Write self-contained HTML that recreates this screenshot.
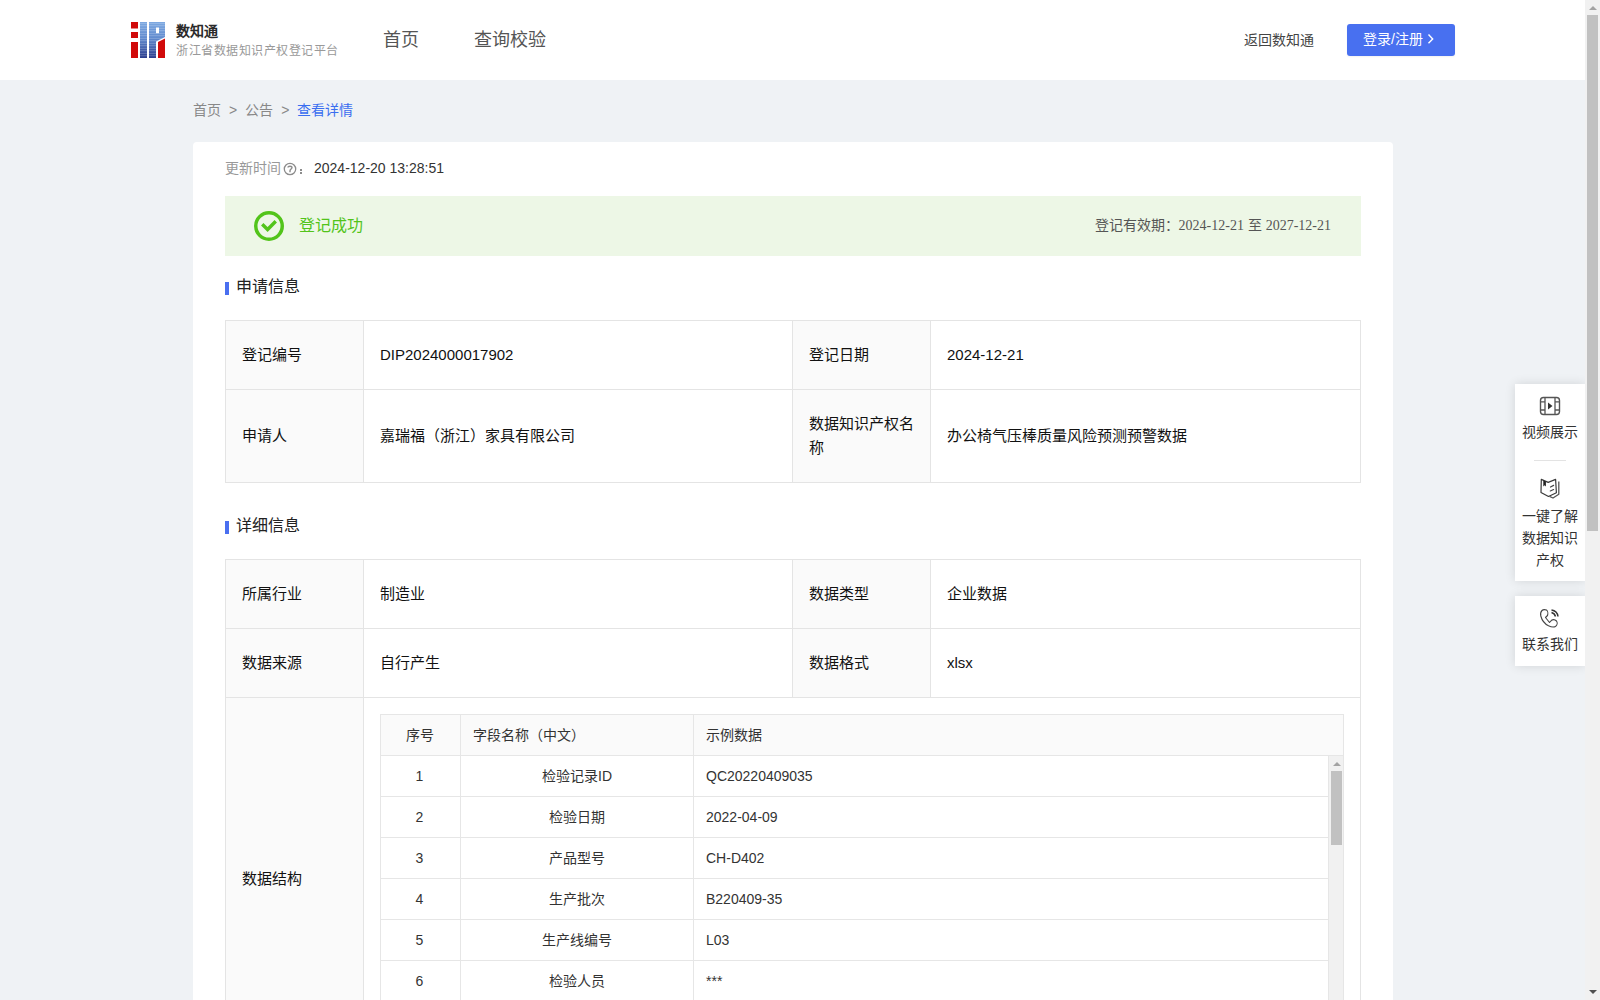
<!DOCTYPE html>
<html lang="zh-CN">
<head>
<meta charset="utf-8">
<title>查看详情</title>
<style>
*{box-sizing:border-box;margin:0;padding:0}
html,body{width:1600px;height:1000px;overflow:hidden}
body{position:relative;background:#eff2f5;font-family:"Liberation Sans",sans-serif;color:#333;font-size:14px}
.abs{position:absolute;white-space:nowrap}
.header{position:absolute;left:0;top:0;width:1585px;height:80px;background:#fff}
.btn{position:absolute;left:1347px;top:24px;width:108px;height:32px;background:#4870f0;border-radius:3px;box-shadow:0 1px 2px rgba(0,0,0,.06);color:#fff;font-size:14px;line-height:32px}
.card{position:absolute;left:193px;top:142px;width:1200px;height:900px;background:#fff;border-radius:4px}
.alert{position:absolute;left:225px;top:196px;width:1136px;height:60px;background:#edf7e6}
.bar{position:absolute;width:4px;height:13px;background:#4a6ff0}
.title{font-size:16px;color:#222;line-height:24px}
table.info{position:absolute;left:225px;border-collapse:collapse;table-layout:fixed;width:1135px;font-size:15px;color:#111}
table.info td{border:1px solid #e4e4e4;padding:22px 16px;line-height:24px;vertical-align:middle;word-break:break-all}
table.info td.l{background:#fafafa}
.side{position:absolute;left:1515px;width:70px;background:#fff;box-shadow:0 0 10px rgba(0,0,0,.12);text-align:center;font-size:14px;color:#333}
.sb{position:absolute;background:#f1f1f1}
</style>
</head>
<body>
<div class="header">
  <svg class="abs" style="left:131px;top:22px" width="34" height="36" viewBox="0 0 34 36">
    <defs>
      <linearGradient id="g" x1="0" y1="0" x2="0" y2="1">
        <stop offset="0" stop-color="#79a6e0"/>
        <stop offset="0.45" stop-color="#5b86cc"/>
        <stop offset="1" stop-color="#24368a"/>
      </linearGradient>
      <pattern id="sl" x="0" y="0" width="34" height="2.5" patternUnits="userSpaceOnUse">
        <rect x="0" y="0.8" width="34" height="1" fill="#fff" opacity="0.28"/>
      </pattern>
    </defs>
    <rect x="0" y="0" width="7" height="6.5" fill="#d10a0a"/>
    <rect x="0" y="10" width="7" height="6" fill="#d10a0a"/>
    <rect x="0" y="20" width="7" height="16" fill="#d10a0a"/>
    <rect x="9" y="0" width="7" height="36" fill="url(#g)"/>
    <path d="M18 0H34V15L25 19.5V36H18Z M25 5.6V11.2H28V5.6Z" fill="url(#g)" fill-rule="evenodd"/>
    <path d="M27 20L34 16.5V36H27Z" fill="#d10a0a"/>
    <rect x="9" y="0" width="7" height="36" fill="url(#sl)"/>
    <path d="M18 0H34V15L25 19.5V36H18Z M25 5.6V11.2H28V5.6Z" fill="url(#sl)" fill-rule="evenodd"/>
  </svg>
  <div class="abs" style="left:176px;top:21px;font-size:14px;font-weight:bold;color:#2a2a2a;line-height:20px">数知通</div>
  <div class="abs" style="left:176px;top:42px;font-size:12px;letter-spacing:0.5px;color:#999;line-height:18px">浙江省数据知识产权登记平台</div>
  <div class="abs" style="left:383px;top:28px;font-size:18px;color:#555;line-height:24px">首页</div>
  <div class="abs" style="left:474px;top:28px;font-size:18px;color:#555;line-height:24px">查询校验</div>
  <div class="abs" style="left:1244px;top:29px;font-size:14px;color:#444;line-height:22px">返回数知通</div>
  <div class="btn"><span class="abs" style="left:16px;top:-1px">登录/注册</span><svg class="abs" style="left:80px;top:9px" width="8" height="12" viewBox="0 0 8 12"><path d="M1.5 1.5L5.7 5.9L1.5 10.3" fill="none" stroke="#fff" stroke-width="1.4"/></svg></div>
</div>

<div class="abs" style="left:193px;top:99px;font-size:14px;line-height:22px;color:#888">首页<span style="margin:0 8px">&gt;</span>公告<span style="margin:0 8px">&gt;</span><span style="color:#3a6ef0">查看详情</span></div>

<div class="card"></div>

<div class="abs" style="left:225px;top:157px;font-size:14px;line-height:22px;color:#999">更新时间</div>
<svg class="abs" style="left:283px;top:162px" width="14" height="14" viewBox="0 0 14 14">
  <circle cx="7" cy="7" r="5.7" fill="none" stroke="#8c8c8c" stroke-width="1.3"/>
  <path d="M5 5.6C5 3.7 9 3.7 9 5.6C9 7 7 7.1 7 8.8V10.2" fill="none" stroke="#8c8c8c" stroke-width="1.4"/>
</svg>
<div class="abs" style="left:300px;top:169px;width:2px;height:2px;background:#8c8c8c"></div>
<div class="abs" style="left:300px;top:172px;width:2px;height:2px;background:#8c8c8c"></div>
<div class="abs" style="left:314px;top:157px;font-size:14px;line-height:22px;color:#333">2024-12-20 13:28:51</div>

<div class="alert">
  <svg class="abs" style="left:29px;top:15px" width="30" height="30" viewBox="0 0 30 30">
    <circle cx="15" cy="15" r="13.25" fill="none" stroke="#52c41a" stroke-width="3.5"/>
    <path d="M8.25 13.2L13.6 18.5L21.75 10.3" fill="none" stroke="#52c41a" stroke-width="3.4"/>
  </svg>
  <div class="abs" style="left:74px;top:18px;font-size:16px;line-height:24px;color:#52c41a">登记成功</div>
  <div class="abs" style="right:30px;top:18px;font-size:14px;line-height:22px;color:#555">登记有效期：<span style="font-family:'Liberation Serif',serif">2024-12-21</span> 至 <span style="font-family:'Liberation Serif',serif">2027-12-21</span></div>
</div>

<div class="bar" style="left:225px;top:282px"></div>
<div class="abs title" style="left:236px;top:275px">申请信息</div>

<table class="info" style="top:320px">
  <colgroup><col style="width:138px"><col style="width:429px"><col style="width:138px"><col style="width:430px"></colgroup>
  <tr><td class="l">登记编号</td><td>DIP2024000017902</td><td class="l">登记日期</td><td>2024-12-21</td></tr>
  <tr><td class="l">申请人</td><td>嘉瑞福（浙江）家具有限公司</td><td class="l">数据知识产权名称</td><td>办公椅气压棒质量风险预测预警数据</td></tr>
</table>

<div class="bar" style="left:225px;top:521px"></div>
<div class="abs title" style="left:236px;top:514px">详细信息</div>

<table class="info" style="top:559px">
  <colgroup><col style="width:138px"><col style="width:429px"><col style="width:138px"><col style="width:430px"></colgroup>
  <tr><td class="l">所属行业</td><td>制造业</td><td class="l">数据类型</td><td>企业数据</td></tr>
  <tr><td class="l">数据来源</td><td>自行产生</td><td class="l">数据格式</td><td>xlsx</td></tr>
  <tr><td class="l" style="height:362px">数据结构</td><td colspan="3"></td></tr>
</table>


<!-- inner data structure table -->
<div class="abs" style="left:380px;top:714px;width:964px;height:42px;border:1px solid #e6e6e6;background:#fafafa;font-size:14px;color:#333;line-height:40px">
  <div class="abs" style="left:79px;top:0;width:1px;height:40px;background:#e6e6e6"></div>
  <div class="abs" style="left:312px;top:0;width:1px;height:40px;background:#e6e6e6"></div>
  <div class="abs" style="left:-1px;top:0;width:79px;text-align:center">序号</div>
  <div class="abs" style="left:92px;top:0">字段名称（中文）</div>
  <div class="abs" style="left:325px;top:0">示例数据</div>
</div>
<div class="abs" style="left:380px;top:756px;width:964px;height:260px;border-left:1px solid #e6e6e6;border-right:1px solid #e6e6e6;overflow:hidden;font-size:14px;color:#333;line-height:40px">
  <div class="abs" style="left:79px;top:0;width:1px;height:260px;background:#e6e6e6"></div>
  <div class="abs" style="left:312px;top:0;width:1px;height:260px;background:#e6e6e6"></div>
  <div class="abs" style="left:947px;top:0;width:1px;height:260px;background:#e6e6e6"></div>
  <div class="abs" style="left:0;top:0px;width:947px;height:41px;border-bottom:1px solid #e6e6e6">
    <div class="abs" style="left:-1px;top:0;width:79px;text-align:center">1</div>
    <div class="abs" style="left:80px;top:0;width:232px;text-align:center">检验记录ID</div>
    <div class="abs" style="left:325px;top:0">QC20220409035</div></div>
  <div class="abs" style="left:0;top:41px;width:947px;height:41px;border-bottom:1px solid #e6e6e6">
    <div class="abs" style="left:-1px;top:0;width:79px;text-align:center">2</div>
    <div class="abs" style="left:80px;top:0;width:232px;text-align:center">检验日期</div>
    <div class="abs" style="left:325px;top:0">2022-04-09</div></div>
  <div class="abs" style="left:0;top:82px;width:947px;height:41px;border-bottom:1px solid #e6e6e6">
    <div class="abs" style="left:-1px;top:0;width:79px;text-align:center">3</div>
    <div class="abs" style="left:80px;top:0;width:232px;text-align:center">产品型号</div>
    <div class="abs" style="left:325px;top:0">CH-D402</div></div>
  <div class="abs" style="left:0;top:123px;width:947px;height:41px;border-bottom:1px solid #e6e6e6">
    <div class="abs" style="left:-1px;top:0;width:79px;text-align:center">4</div>
    <div class="abs" style="left:80px;top:0;width:232px;text-align:center">生产批次</div>
    <div class="abs" style="left:325px;top:0">B220409-35</div></div>
  <div class="abs" style="left:0;top:164px;width:947px;height:41px;border-bottom:1px solid #e6e6e6">
    <div class="abs" style="left:-1px;top:0;width:79px;text-align:center">5</div>
    <div class="abs" style="left:80px;top:0;width:232px;text-align:center">生产线编号</div>
    <div class="abs" style="left:325px;top:0">L03</div></div>
  <div class="abs" style="left:0;top:205px;width:947px;height:41px;border-bottom:1px solid #e6e6e6">
    <div class="abs" style="left:-1px;top:0;width:79px;text-align:center">6</div>
    <div class="abs" style="left:80px;top:0;width:232px;text-align:center">检验人员</div>
    <div class="abs" style="left:325px;top:0">***</div></div>
  <div class="abs" style="left:0;top:246px;width:947px;height:41px;border-bottom:1px solid #e6e6e6">
    <div class="abs" style="left:-1px;top:0;width:79px;text-align:center">7</div>
    <div class="abs" style="left:80px;top:0;width:232px;text-align:center">检验结果</div>
    <div class="abs" style="left:325px;top:0">合格</div></div>
  
  <div class="abs" style="left:948px;top:0;width:15px;height:260px;background:#f1f1f1"></div>
  <svg class="abs" style="left:952px;top:6px" width="8" height="4" viewBox="0 0 8 4"><path d="M0 4L4 0L8 4Z" fill="#a3a3a3"/></svg>
  <div class="abs" style="left:950px;top:15px;width:11px;height:74px;background:#c1c1c1"></div>
</div>
<!-- side panel -->
<div class="side" style="top:384px;height:197px">
  <svg class="abs" style="left:24px;top:12px" width="22" height="20" viewBox="0 0 22 20">
    <rect x="1.5" y="1.5" width="19" height="17" rx="3" fill="none" stroke="#555" stroke-width="1.4"/>
    <path d="M6 1.5V18.5M16 1.5V18.5M1.5 5.8H6M1.5 14H6M16 5.8H20.5M16 14H20.5" stroke="#555" stroke-width="1.3"/>
    <path d="M9 6.5L13.5 10L9 13.5Z" fill="#333"/>
  </svg>
  <div class="abs" style="left:7px;top:38px;line-height:20px">视频展示</div>
  <div class="abs" style="left:19px;top:76px;width:32px;height:1px;background:#e3e3e3"></div>
  <svg class="abs" style="left:24px;top:94px" width="22" height="22" viewBox="0 0 22 22">
    <path d="M2.3 1.4L9.2 4.4L16.6 1.4L17.4 14.8L9.5 18.5L2 14.5Z" fill="none" stroke="#3a3a3a" stroke-width="1.2" stroke-linejoin="round"/>
    <path d="M19.8 3.5V16.3L14 20L10.5 18.3" fill="none" stroke="#555" stroke-width="1.3" stroke-linejoin="round"/>
    <path d="M4.3 2.4V8.6L5.6 7.3L6.9 8.6V3.4Z" fill="#222"/>
    <path d="M11.5 9L14.6 7.4M11.3 13L14.6 11.5" stroke="#444" stroke-width="1.2" stroke-linecap="round"/>
  </svg>
  <div class="abs" style="left:7px;top:121px;line-height:22px;white-space:normal;width:56px">一键了解数据知识产权</div>
</div>
<div class="side" style="top:596px;height:70px">
  <svg class="abs" style="left:24px;top:12px" width="22" height="22" viewBox="0 0 22 22">
    <path d="M3 2.5C4 1.5 6 1.5 7.5 2C9 3 9 6 8.5 7.5L6.5 9.5L10.5 14.5L12.5 12.3C14 11.3 16 11.5 17.5 13C18.5 14.5 18.5 17 16.5 18.5C14.5 19.5 12 19 9.5 17.8C6 16 3 12.5 1.8 8C1.3 6 1.5 4 3 2.5Z" fill="none" stroke="#444" stroke-width="1.1" stroke-linejoin="round"/>
    <path d="M12.5 4.5C14.5 5 16 6.5 16.5 8.5M12.5 2C16 2.5 18.5 5 19 8.5" fill="none" stroke="#333" stroke-width="1.5"/>
  </svg>
  <div class="abs" style="left:7px;top:38px;line-height:20px">联系我们</div>
</div>

<!-- page scrollbar -->
<div class="sb" style="left:1585px;top:0;width:15px;height:1000px"></div>
<svg class="abs" style="left:1589px;top:6px" width="8" height="4" viewBox="0 0 8 4"><path d="M0 4L4 0L8 4Z" fill="#a3a3a3"/></svg>
<div class="abs" style="left:1587px;top:15px;width:11px;height:516px;background:#c1c1c1"></div>
<svg class="abs" style="left:1589px;top:990px" width="8" height="4" viewBox="0 0 8 4"><path d="M0 0L4 4L8 0Z" fill="#505050"/></svg>
</body>
</html>
